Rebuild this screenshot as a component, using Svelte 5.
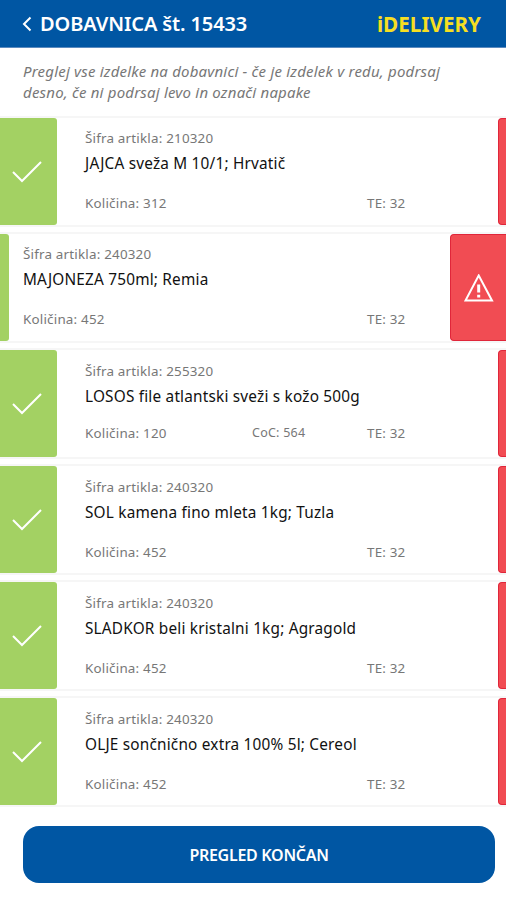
<script lang="ts">
    type Article = {
        code: string;
        name: string;
        qty: number;
        te: number;
        coc?: number;
        rejected?: boolean;
    };

    const articles: Article[] = [
        { code: "210320", name: "JAJCA sveža M 10/1; Hrvatič", qty: 312, te: 32 },
        { code: "240320", name: "MAJONEZA 750ml; Remia", qty: 452, te: 32, rejected: true },
        { code: "255320", name: "LOSOS file atlantski sveži s kožo 500g", qty: 120, te: 32, coc: 564 },
        { code: "240320", name: "SOL kamena fino mleta 1kg; Tuzla", qty: 452, te: 32 },
        { code: "240320", name: "SLADKOR beli kristalni 1kg; Agragold", qty: 452, te: 32 },
        { code: "240320", name: "OLJE sončnično extra 100% 5l; Cereol", qty: 452, te: 32 },
    ];
</script>

<div class="screen">
    <header>
        <button class="back" aria-label="Nazaj">
            <svg width="10" height="16" viewBox="0 0 10 16">
                <path d="M8.5 1.5 L2 8 L8.5 14.5" />
            </svg>
        </button>
        <h1>DOBAVNICA št. 15433</h1>
        <span class="brand">iDELIVERY</span>
    </header>

    <p class="hint">
        Preglej vse izdelke na dobavnici - če je izdelek v redu, podrsaj<br />
        desno, če ni podrsaj levo in označi napake
    </p>

    <ul class="articles">
        {#each articles as article}
            <li class="article" class:rejected={article.rejected} class:with-coc={article.coc}>
                <div class="side ok">
                    {#if !article.rejected}
                        <svg width="30" height="22" viewBox="0 0 30 22">
                            <path d="M1 11 L10 20 L29 1" />
                        </svg>
                    {/if}
                </div>
                <div class="content">
                    <p class="code">Šifra artikla: {article.code}</p>
                    <p class="name">{article.name}</p>
                    <div class="meta">
                        <span class="qty">Količina: {article.qty}</span>
                        {#if article.coc}
                            <span class="coc">CoC: {article.coc}</span>
                        {/if}
                        <span class="te">TE: {article.te}</span>
                    </div>
                </div>
                <div class="side error">
                    {#if article.rejected}
                        <svg width="30" height="28" viewBox="0 0 30 28">
                            <path d="M14.7 1.5 L28 26.5 H1.5 Z" />
                            <path class="mark" d="M14.7 10.5 V18.5 M14.7 20.8 V23.4" />
                        </svg>
                    {/if}
                </div>
            </li>
        {/each}
    </ul>

    <button class="finish">PREGLED KONČAN</button>
</div>

<style>
    :global(body) {
        background-color: #fff;
    }

    .screen {
        display: flex;
        flex-direction: column;
        width: 506px;
        height: 900px;
        overflow: hidden;
        font-family: "Noto Sans", "Open Sans", sans-serif;
        color: #777;
    }

    header {
        display: flex;
        align-items: center;
        box-sizing: border-box;
        height: 48px;
        padding: 0 25px 0 22px;
        background-color: #0056a3;
        border-bottom: 1px solid #5b8abf;
        flex-shrink: 0;
    }
    .back {
        width: 18px;
        height: 16px;
        padding: 0;
        border: none;
        background: none;
        line-height: 0;
        text-align: left;
    }
    .back path {
        fill: none;
        stroke: #fff;
        stroke-width: 2;
    }
    h1 {
        margin: 0;
        color: #fff;
        font-size: 20px;
        font-weight: 600;
        letter-spacing: -0.12px;
    }
    .brand {
        margin-left: auto;
        color: #f6de22;
        font-size: 20.7px;
        font-weight: 700;
    }

    .hint {
        height: 70px;
        box-sizing: border-box;
        margin: 0;
        padding: 13px 23px 0;
        font-size: 15px;
        font-style: italic;
        letter-spacing: 0.2px;
        line-height: 21px;
        white-space: nowrap;
        flex-shrink: 0;
    }

    .articles {
        display: flex;
        flex-direction: column;
        gap: 9.1px;
        margin: 0;
        padding: 0;
        list-style: none;
    }
    .article {
        display: flex;
        height: 107px;
        box-shadow: 0 0 0 2px #f6f6f6;
    }
    .side {
        display: flex;
        align-items: center;
        justify-content: center;
        flex-shrink: 0;
    }
    .side path {
        fill: none;
        stroke: #fff;
        stroke-width: 2;
    }
    .side path.mark {
        stroke-width: 3;
    }
    .ok {
        width: 57px;
        background-color: #a3d163;
        border-radius: 0 3px 3px 0;
    }
    .ok svg {
        margin-right: 4px;
    }
    .error {
        width: 8px;
        box-sizing: border-box;
        background-color: #f14c53;
        border: 1px solid #e0263a;
        border-right: none;
        border-radius: 4px 0 0 4px;
    }
    .rejected .ok {
        width: 9px;
    }
    .rejected .error {
        width: 56px;
    }

    .content {
        flex: 1;
        padding: 11.4px 0 0 28px;
        letter-spacing: 0.2px;
    }
    .rejected .content {
        padding-left: 14px;
    }
    .content p {
        margin: 0;
        white-space: nowrap;
    }
    .code {
        font-size: 13.4px;
        line-height: 18px;
    }
    .content .name {
        margin-top: 6px;
        color: #111;
        font-size: 15.35px;
        line-height: 20px;
    }
    .meta {
        display: grid;
        grid-template-columns: 167px 115px auto;
        margin-top: 21px;
        font-size: 13.4px;
        line-height: 18px;
    }
    .rejected .meta {
        grid-template-columns: 229px 115px auto;
    }
    .with-coc .meta {
        margin-top: 18px;
    }
    .coc {
        font-size: 12.5px;
        letter-spacing: 0.25px;
    }
    .te {
        grid-column: 3;
    }

    .finish {
        height: 57px;
        margin: 20.5px 11px 0 23px;
        padding: 2px 0 0;
        border: none;
        border-radius: 16px;
        background-color: #0056a3;
        color: #fff;
        font-family: inherit;
        font-size: 16px;
        font-weight: 600;
        letter-spacing: -0.28px;
        flex-shrink: 0;
    }
</style>
